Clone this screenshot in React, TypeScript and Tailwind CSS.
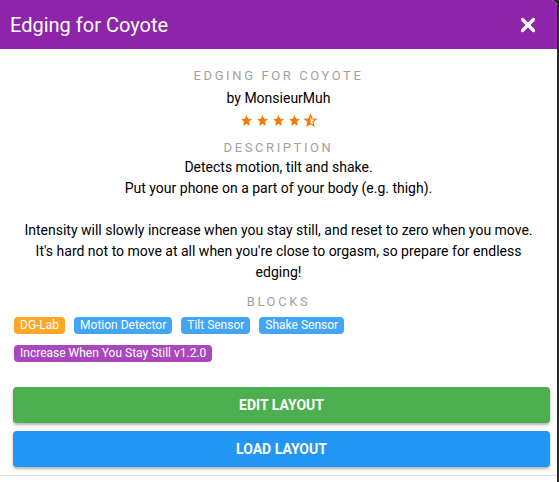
import { X } from 'lucide-react';

const STAR = 'M12 2l2.9 6.9 7.1.6-5.4 4.7 1.6 7.3L12 17.8 5.8 21.5l1.6-7.3L2 9.5l7.1-.6z';

function Star({ half = false }: { half?: boolean }) {
  return (
    <svg viewBox="0 0 24 24" className="w-[13px] h-[13px]">
      {half ? (
        <>
          <defs>
            <clipPath id="lefthalf">
              <rect x="0" y="0" width="12" height="24" />
            </clipPath>
          </defs>
          <path d={STAR} fill="none" stroke="#f57c00" strokeWidth="2.4" />
          <path d={STAR} fill="#f57c00" clipPath="url(#lefthalf)" />
        </>
      ) : (
        <path d={STAR} fill="#f57c00" />
      )}
    </svg>
  );
}

const chips = [
  { label: 'DG-Lab', color: 'bg-[#ffa726]' },
  { label: 'Motion Detector', color: 'bg-[#42a5f5]' },
  { label: 'Tilt Sensor', color: 'bg-[#42a5f5]' },
  { label: 'Shake Sensor', color: 'bg-[#42a5f5]' },
];

export default function App() {
  return (
    <div className="h-[482px] w-full bg-[#2a2a2a] font-['Roboto',sans-serif]">
      <div className="w-[557px] h-full bg-white rounded-tr-md overflow-hidden flex flex-col">
        {/* Header */}
        <div className="h-[49px] bg-[#8e24aa] flex items-center justify-between pl-[10px] pr-[18px] shrink-0">
          <h1 className="text-white text-[20px] leading-none">Edging for Coyote</h1>
          <X className="w-[22px] h-[22px] text-white" strokeWidth={3.5} />
        </div>

        {/* Body */}
        <div className="flex flex-col items-center pt-[18px] px-[13px]">
          <div className="text-[13px] tracking-[0.2em] text-[#a59f9b] leading-[18px]">EDGING FOR COYOTE</div>
          <div className="text-[14px] text-black leading-[20px] mt-[3px]">by MonsieurMuh</div>
          <div className="flex gap-[3px] mt-[6px] h-[13px] items-center">
            <Star />
            <Star />
            <Star />
            <Star />
            <Star half />
          </div>
          <div className="text-[13px] tracking-[0.2em] text-[#a59f9b] leading-[18px] mt-[12px]">DESCRIPTION</div>
          <div className="text-[14px] text-black leading-[21px] text-center">
            <p>Detects motion, tilt and shake.</p>
            <p>Put your phone on a part of your body (e.g. thigh).</p>
            <p>&nbsp;</p>
            <p>Intensity will slowly increase when you stay still, and reset to zero when you move.</p>
            <p>It's hard not to move at all when you're close to orgasm, so prepare for endless</p>
            <p>edging!</p>
          </div>
          <div className="text-[13px] tracking-[0.2em] text-[#a59f9b] leading-[18px] mt-[10px]">BLOCKS</div>
        </div>

        {/* Chips */}
        <div className="px-[14px] pt-[6px] flex flex-col gap-[11px]">
          <div className="flex gap-[9px]">
            {chips.map((c) => (
              <span
                key={c.label}
                className={`${c.color} text-white text-[12px] leading-[17px] px-[6px] rounded-[4px]`}
              >
                {c.label}
              </span>
            ))}
          </div>
          <div className="flex">
            <span className="bg-[#ab47bc] text-white text-[12px] leading-[17px] px-[6px] rounded-[4px]">
              Increase When You Stay Still v1.2.0
            </span>
          </div>
        </div>

        {/* Actions */}
        <div className="pl-[13px] pr-[7px] mt-[25px] flex flex-col gap-[8px]">
          <button className="h-[36px] w-full bg-[#4caf50] text-white text-[14px] font-bold rounded-[4px] shadow-[0_2px_3px_rgba(0,0,0,0.3)]">
            EDIT LAYOUT
          </button>
          <button className="h-[36px] w-full bg-[#2196f3] text-white text-[14px] font-bold rounded-[4px] shadow-[0_2px_3px_rgba(0,0,0,0.3)]">
            LOAD LAYOUT
          </button>
        </div>
        <div className="mt-[8px] border-t border-[#e0e0e0]" />
      </div>
    </div>
  );
}
